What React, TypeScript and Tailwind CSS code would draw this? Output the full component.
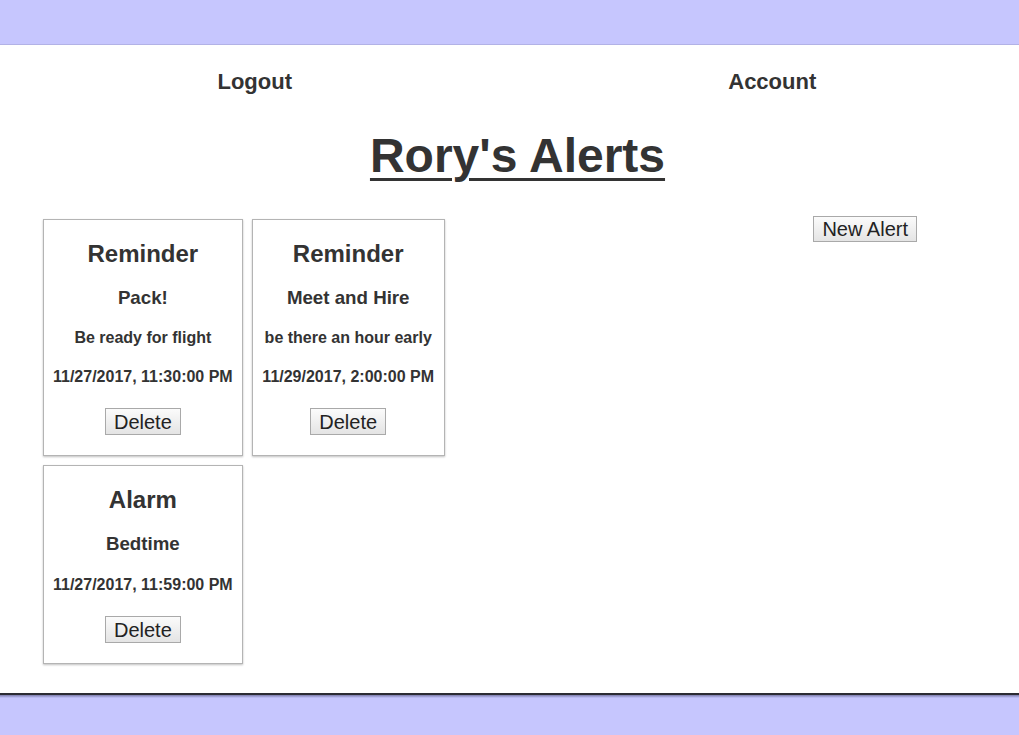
import React from "react"

type Alert = {
  id: number
  kind: string
  title: string
  note?: string
  when: string
}

const alerts: Alert[] = [
  { id: 1, kind: "Reminder", title: "Pack!", note: "Be ready for flight", when: "11/27/2017, 11:30:00 PM" },
  { id: 2, kind: "Reminder", title: "Meet and Hire", note: "be there an hour early", when: "11/29/2017, 2:00:00 PM" },
  { id: 3, kind: "Alarm", title: "Bedtime", when: "11/27/2017, 11:59:00 PM" },
]

function MacButton({ children, className = "" }: { children: React.ReactNode; className?: string }) {
  return (
    <button
      className={
        "border border-[#a9a9a9] bg-linear-to-b from-[#fbfbfb] to-[#e4e4e4] px-2 text-[20px] font-normal text-[#222] leading-none " +
        className
      }
    >
      {children}
    </button>
  )
}

function AlertCard({ alert }: { alert: Alert }) {
  return (
    <div className="flex min-w-[193px] w-fit flex-col items-center border border-[#b4b4b4] bg-white px-[9px] pb-[20px] text-center shadow-[0_1px_2px_rgba(0,0,0,0.25)]">
      <h2 className="mt-[20px] text-[24px] font-bold leading-[28px]">{alert.kind}</h2>
      <h3 className="mt-[19px] text-[18.72px] font-bold leading-[22px]">{alert.title}</h3>
      {alert.note && <h4 className="mt-[20px] text-[16px] font-bold leading-[18px]">{alert.note}</h4>}
      <h4 className="mt-[21px] whitespace-nowrap text-[16px] font-bold leading-[18px]">{alert.when}</h4>
      <MacButton className="mt-[22px] h-[27px]">Delete</MacButton>
    </div>
  )
}

export default function App() {
  return (
    <div className="flex h-[735px] w-[1019px] flex-col bg-[#c6c6fe] font-['Liberation_Sans',Arial,sans-serif] text-[#333]">
      {/* top band */}
      <div className="h-[45px] border-b border-[#b2b2e6]" />

      {/* page body */}
      <main className="flex h-[648px] flex-col bg-white">
        <nav className="grid grid-cols-2 pt-[25px]">
          <div className="text-center">
            <a className="text-[22px] font-bold leading-[24px]">Logout</a>
          </div>
          <div className="pl-[16px] text-center">
            <a className="text-[22px] font-bold leading-[24px]">Account</a>
          </div>
        </nav>

        <h1 className="mt-[33px] pl-[16px] text-center text-[48px] font-bold leading-[54px] underline decoration-[3px] underline-offset-[6px]">
          Rory's Alerts
        </h1>

        <div className="mt-[36px] flex">
          <div className="flex w-[500px] flex-wrap content-start items-start gap-[9px] pl-[43px]">
            {alerts.map((a) => (
              <AlertCard key={a.id} alert={a} />
            ))}
          </div>
          <div className="flex flex-1 justify-end pr-[102px]">
            <MacButton className="-mt-[3px] h-[26px]">New Alert</MacButton>
          </div>
        </div>
      </main>

      {/* bottom band */}
      <div className="flex-1 border-t-2 border-[#2c2c34]">
        <div className="h-[3px] bg-linear-to-b from-[#7c7cac] to-[#c6c6fe]" />
      </div>
    </div>
  )
}
